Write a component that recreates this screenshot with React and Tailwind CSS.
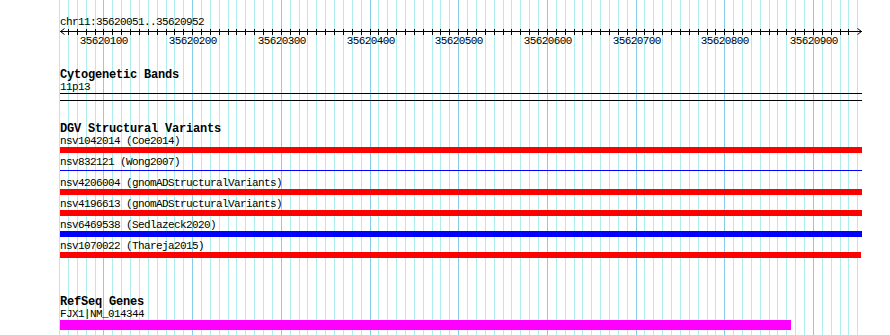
import React from 'react';

// 10 bp grid, 800px for 902 bp
const grid = Array.from({ length: 91 }, (_, k) => ({
  x: Math.round(59.1 + k * 8.869),
  major: k % 10 === 5,
  pos: 35620050 + k * 10,
}));

const variants = [
  { label: 'nsv1042014 (Coe2014)', kind: 'red' },
  { label: 'nsv832121 (Wong2007)', kind: 'line' },
  { label: 'nsv4206004 (gnomADStructuralVariants)', kind: 'red' },
  { label: 'nsv4196613 (gnomADStructuralVariants)', kind: 'red' },
  { label: 'nsv6469538 (Sedlazeck2020)', kind: 'blue' },
  { label: 'nsv1070022 (Thareja2015)', kind: 'red', short: true },
];

const Grid = () => (
  <svg className="absolute inset-0" width="890" height="335">
    {grid.map((g) => (
      <line
        key={g.pos}
        x1={g.x + 0.5}
        x2={g.x + 0.5}
        y1="0"
        y2="335"
        stroke={g.major ? '#87ceeb' : '#afeeee'}
        strokeWidth="1"
        shapeRendering="crispEdges"
      />
    ))}
  </svg>
);

const Ruler = () => (
  <div className="relative w-[802px] h-[20px]">
    <svg width="802" height="8" className="block">
      <line x1="0" x2="802" y1="3.5" y2="3.5" stroke="#000" shapeRendering="crispEdges" />
      {grid.slice(1, 90).map((g) => (
        <line
          key={g.pos}
          x1={g.x - 59.5}
          x2={g.x - 59.5}
          y1="1"
          y2="7"
          stroke="#000"
          shapeRendering="crispEdges"
        />
      ))}
      <polyline points="4.5,0.5 0.5,3.5 4.5,6.5" fill="none" stroke="#000" />
      <polyline points="797.5,0.5 801.5,3.5 797.5,6.5" fill="none" stroke="#000" />
    </svg>
    {/* tick labels sit on the ruler drawing */}
    {grid
      .filter((g) => g.major)
      .map((g) => (
        <span
          key={g.pos}
          className="absolute top-[7px] w-[60px] -ml-[30px] text-center h-[12px] leading-[12px] text-[11px] tracking-[-0.6px] text-black"
          style={{ left: g.x - 60 + 0.8 }}
        >
          {g.pos}
        </span>
      ))}
  </div>
);

const Label = ({ children }) => (
  <div className="h-[12px] leading-[12px] text-[11px] tracking-[-0.6px] whitespace-nowrap text-black">
    {children}
  </div>
);

const Header = ({ children }) => (
  <div className="h-[12px] leading-[12px] text-[12px] tracking-[-0.2px] font-bold whitespace-nowrap text-black">
    {children}
  </div>
);

const VariantRow = ({ v }) => (
  <div className="h-[21px]">
    <Label>{v.label}</Label>
    <div className="h-[6px]">
      {v.kind === 'line' && <div className="mt-[2px] h-px w-[802px] bg-[#0000ff]" />}
      {v.kind === 'red' && <div className={`h-[6px] bg-[#ff0000] ${v.short ? 'w-[801px]' : 'w-[802px]'}`} />}
      {v.kind === 'blue' && <div className="h-[6px] w-[802px] bg-[#0000ff]" />}
    </div>
  </div>
);

export default function App() {
  return (
    <div className="relative w-[890px] h-[335px] overflow-hidden bg-white font-['Liberation_Mono',monospace]">
      <Grid />
      <div className="relative pl-[60px] pt-[16px] w-[862px]">
        <Label>chr11:35620051..35620952</Label>
        <Ruler />

        <div className="mt-[21px]">
          <Header>Cytogenetic Bands</Header>
          <Label>11p13</Label>
          <div className="h-[8px] w-[802px] border-y border-black" />
        </div>

        <div className="mt-[22px]">
          <Header>DGV Structural Variants</Header>
          {variants.map((v) => (
            <VariantRow key={v.label} v={v} />
          ))}
        </div>

        <div className="mt-[35px]">
          <Header>RefSeq Genes</Header>
          <Label>FJX1|NM_014344</Label>
          <div className="h-[10px] w-[731px] bg-[#ff00ff]" />
        </div>
      </div>
    </div>
  );
}
